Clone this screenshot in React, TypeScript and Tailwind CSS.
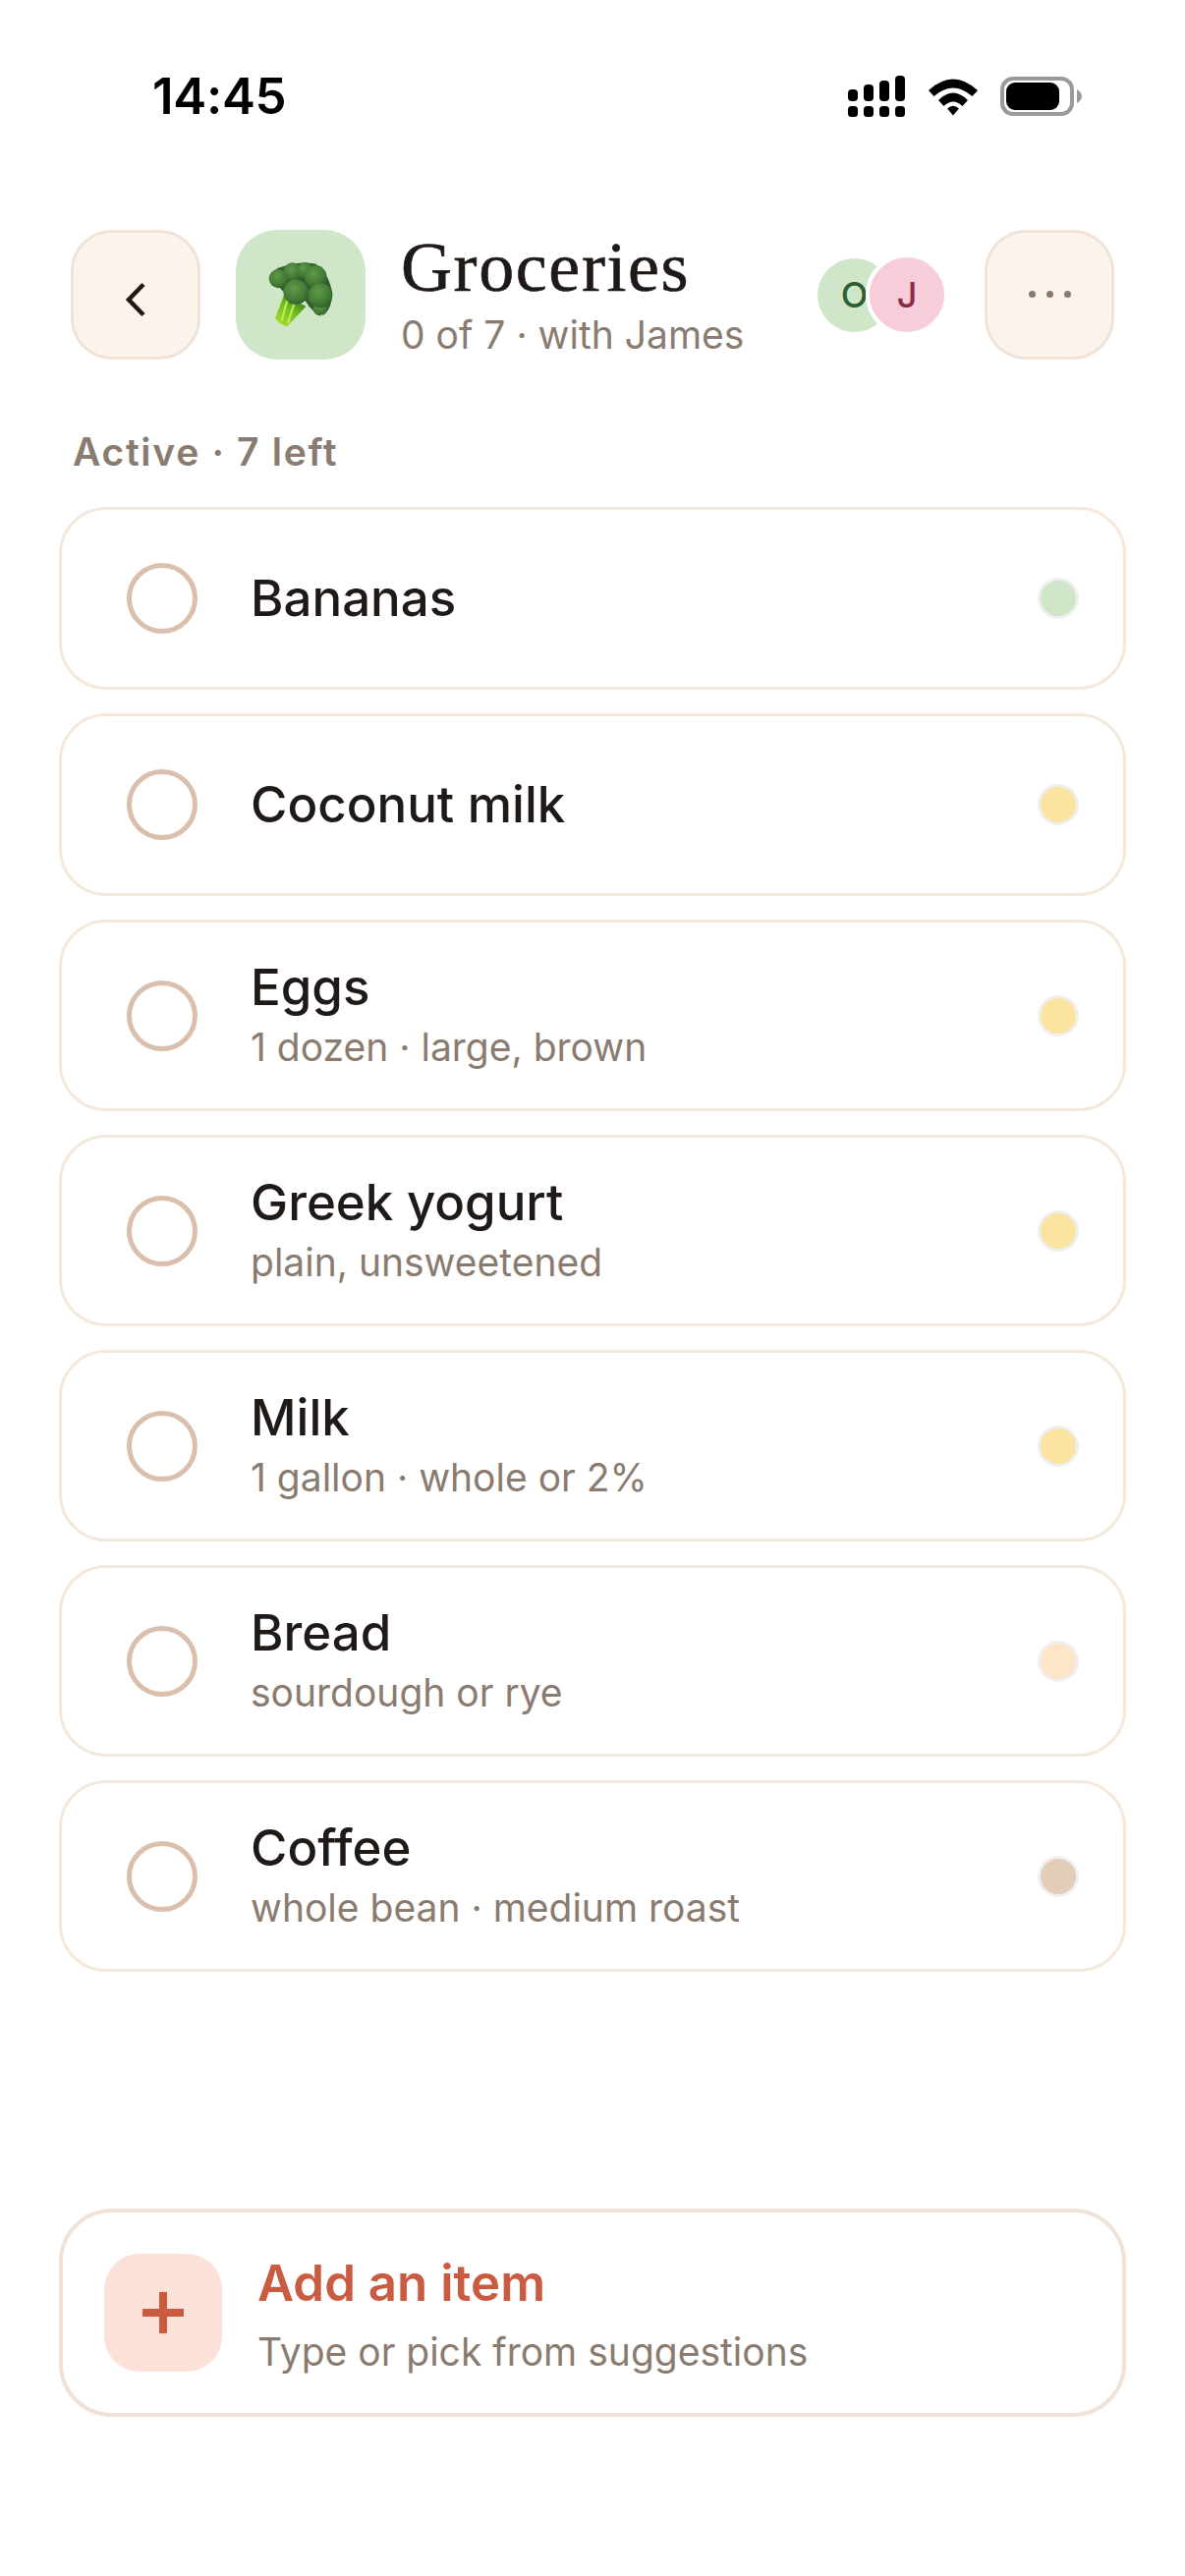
import React from "react";

const Broccoli = () => (
  <svg width="66" height="66" viewBox="160 148 192 192" className="block">
    <defs>
      <linearGradient id="stem" x1="190" y1="330" x2="250" y2="250" gradientUnits="userSpaceOnUse">
        <stop offset="0" stopColor="#a6dc2c" />
        <stop offset="0.55" stopColor="#6fbf1e" />
        <stop offset="1" stopColor="#357f1e" />
      </linearGradient>
      <radialGradient id="flo" cx="0.42" cy="0.36" r="0.72">
        <stop offset="0" stopColor="#5f9a48" />
        <stop offset="0.6" stopColor="#447c37" />
        <stop offset="1" stopColor="#2c5c27" />
      </radialGradient>
      <filter id="rough" x="-10%" y="-10%" width="120%" height="120%">
        <feTurbulence type="fractalNoise" baseFrequency="0.35" numOctaves="2" seed="4" />
        <feDisplacementMap in="SourceGraphic" scale="5" />
      </filter>
    </defs>
    <path d="M206 246 L180 314 Q196 334 216 338 L272 278 L240 262 Z" fill="url(#stem)" />
    <path d="M216 262 L200 318 M236 272 L218 328" stroke="#c4ea5a" strokeWidth="6" fill="none" strokeLinecap="round" />
    <g filter="url(#rough)">
      <path d="M168 196 Q170 166 204 160 Q250 144 300 152 Q340 180 350 240 Q346 296 318 302 Q290 298 270 262 L210 240 Z" fill="#2f5f29" />
      <circle cx="314" cy="284" r="22" fill="url(#flo)" />
      <circle cx="232" cy="176" r="27" fill="url(#flo)" />
      <circle cx="268" cy="172" r="24" fill="url(#flo)" />
      <circle cx="190" cy="196" r="28" fill="url(#flo)" />
      <circle cx="300" cy="190" r="33" fill="url(#flo)" />
      <circle cx="314" cy="246" r="36" fill="url(#flo)" />
      <circle cx="242" cy="236" r="37" fill="url(#flo)" />
    </g>
  </svg>
);

const Signal = () => (
  <svg width="60" height="42" viewBox="0 0 60 42" className="block">
    <rect x="1" y="14" width="10" height="12" rx="4" />
    <rect x="17" y="9" width="10" height="17" rx="4" />
    <rect x="33" y="5" width="10" height="21" rx="4" />
    <rect x="49" y="0" width="10" height="26" rx="4" />
    <rect x="1" y="31" width="10" height="11" rx="3.5" />
    <rect x="17" y="31" width="10" height="11" rx="3.5" />
    <rect x="33" y="31" width="10" height="11" rx="3.5" />
    <rect x="49" y="31" width="10" height="11" rx="3.5" />
  </svg>
);

const Wifi = () => (
  <svg width="52" height="40" viewBox="0 0 52 40" className="block">
    <path d="M1 14 Q26 -9 51 14 L45.5 20 Q26 3 6.5 20 Z" />
    <path d="M11 24 Q26 9 41 24 L35.5 30 Q26 21 16.5 30 Z" />
    <path d="M20 32.5 Q26 27 32 32.5 L26 39.5 Z" />
  </svg>
);

const Battery = () => (
  <div className="flex items-center">
    <div className="flex h-[40px] w-[75px] rounded-[13px] border-[4px] border-[#9a9a9a] p-[2px]">
      <div className="h-full w-[54px] rounded-[9px] bg-black" />
    </div>
    <svg width="5" height="14" viewBox="0 0 5 14" className="ml-[3px] block">
      <path d="M0 0 Q5 3 5 7 Q5 11 0 14 Z" fill="#9a9a9a" />
    </svg>
  </div>
);

const items: { name: string; sub?: string; dot: string }[] = [
  { name: "Bananas", dot: "bg-[#cfe6c9]" },
  { name: "Coconut milk", dot: "bg-[#fbe4a0]" },
  { name: "Eggs", sub: "1 dozen · large, brown", dot: "bg-[#fbe4a0]" },
  { name: "Greek yogurt", sub: "plain, unsweetened", dot: "bg-[#fbe4a0]" },
  { name: "Milk", sub: "1 gallon · whole or 2%", dot: "bg-[#fbe4a0]" },
  { name: "Bread", sub: "sourdough or rye", dot: "bg-[#fde6c8]" },
  { name: "Coffee", sub: "whole bean · medium roast", dot: "bg-[#e3cdb8]" },
];

function Row({ name, sub, dot }: { name: string; sub?: string; dot: string }) {
  return (
    <div
      className={`flex items-center rounded-[48px] border-[3px] border-[#f4e8da] bg-white pl-[66px] pr-[45px] ${
        sub ? "h-[195px]" : "h-[186px]"
      }`}
    >
      <div className="h-[72px] w-[72px] shrink-0 rounded-full border-[5px] border-[#d9bfac]" />
      <div className={`ml-[54px] flex-1 ${sub ? "pb-[4px]" : ""}`}>
        <div className="text-[51px] leading-[64px] font-[450] text-[#1f1a17]">{name}</div>
        {sub && <div className="mt-[5px] text-[39px] leading-[48px] text-[#8a7b70]">{sub}</div>}
      </div>
      <div className={`h-[42px] w-[42px] rounded-full border-[3px] border-[#efefef] ${dot}`} />
    </div>
  );
}

export default function App() {
  return (
    <div className="flex h-[2622px] w-[1206px] flex-col bg-white font-['Inter',sans-serif]">
      <div className="flex h-[234px] items-start justify-between pl-[155px] pr-[105px] pt-[64px]">
        <div className="text-[51px] leading-[68px] font-semibold tracking-[-0.3px] text-black">14:45</div>
        <div className="flex items-center gap-[22px] pt-[13px]">
          <Signal />
          <Wifi />
          <Battery />
        </div>
      </div>

      <div className="flex items-center px-[72px]">
        <div className="flex h-[132px] w-[132px] items-center justify-center rounded-[42px] border-[3px] border-[#f0e2d6] bg-[#fbf4ed]">
          <svg width="24" height="36" viewBox="0 0 24 36" className="mt-[10px] block">
            <path d="M20 2.5 L5 18 L20 33.5" fill="none" stroke="#1f1a17" strokeWidth="4.5" />
          </svg>
        </div>
        <div className="ml-[36px] flex h-[132px] w-[132px] items-center justify-center rounded-[42px] bg-[#cfe6c9]">
          <Broccoli />
        </div>
        <div className="ml-[36px] flex-1">
          <div className="font-['Liberation_Serif',serif] text-[72px] leading-[74px] font-normal tracking-[1.6px] text-[#1f1a17] [-webkit-text-stroke:0.6px_#1f1a17]">Groceries</div>
          <div className="mt-[8px] text-[39px] leading-[48px] text-[#8a7b70]">0 of 7 · with James</div>
        </div>
        <div className="flex items-center">
          <div className="flex h-[75px] w-[75px] items-center justify-center rounded-full bg-[#cfe6c9] text-[36px] font-medium text-[#2d5f33]">O</div>
          <div className="relative ml-[-26px] box-content flex h-[76px] w-[76px] items-center justify-center rounded-full border-[4px] border-white bg-[#f6cdd8] text-[36px] font-medium text-[#8a2c45]">J</div>
        </div>
        <div className="ml-[37px] flex h-[132px] w-[132px] items-center justify-center gap-[11px] rounded-[42px] border-[3px] border-[#f0e2d6] bg-[#fbf4ed]">
          <span className="mb-[2px] h-[7px] w-[7px] rounded-full bg-[#8a7b70]" />
          <span className="mb-[2px] h-[7px] w-[7px] rounded-full bg-[#8a7b70]" />
          <span className="mb-[2px] h-[7px] w-[7px] rounded-full bg-[#8a7b70]" />
        </div>
      </div>

      <div className="mt-[70px] pl-[74px] text-[39px] leading-[48px] font-semibold tracking-[1.7px] text-[#8a7b70]">Active · 7 left</div>

      <div className="mx-[60px] mt-[32px] flex flex-col gap-[24px]">
        {items.map((it) => (
          <Row key={it.name} {...it} />
        ))}
      </div>

      <div className="mx-[60px] mt-auto mb-[162px] flex h-[212px] items-center rounded-[54px] border-[4px] border-[#f0e2d6] bg-white pl-[42px]">
        <div className="flex h-[120px] w-[120px] items-center justify-center rounded-[36px] bg-[#fce1d8]">
          <svg width="42" height="42" viewBox="0 0 42 42" className="block">
            <path d="M21 0 V42 M0 21 H42" stroke="#c95b40" strokeWidth="8" />
          </svg>
        </div>
        <div className="ml-[36px] pt-[6px]">
          <div className="text-[51px] leading-[60px] font-semibold text-[#c95b40]">Add an item</div>
          <div className="mt-[14px] text-[39px] leading-[52px] text-[#8a7b70]">Type or pick from suggestions</div>
        </div>
      </div>
    </div>
  );
}
